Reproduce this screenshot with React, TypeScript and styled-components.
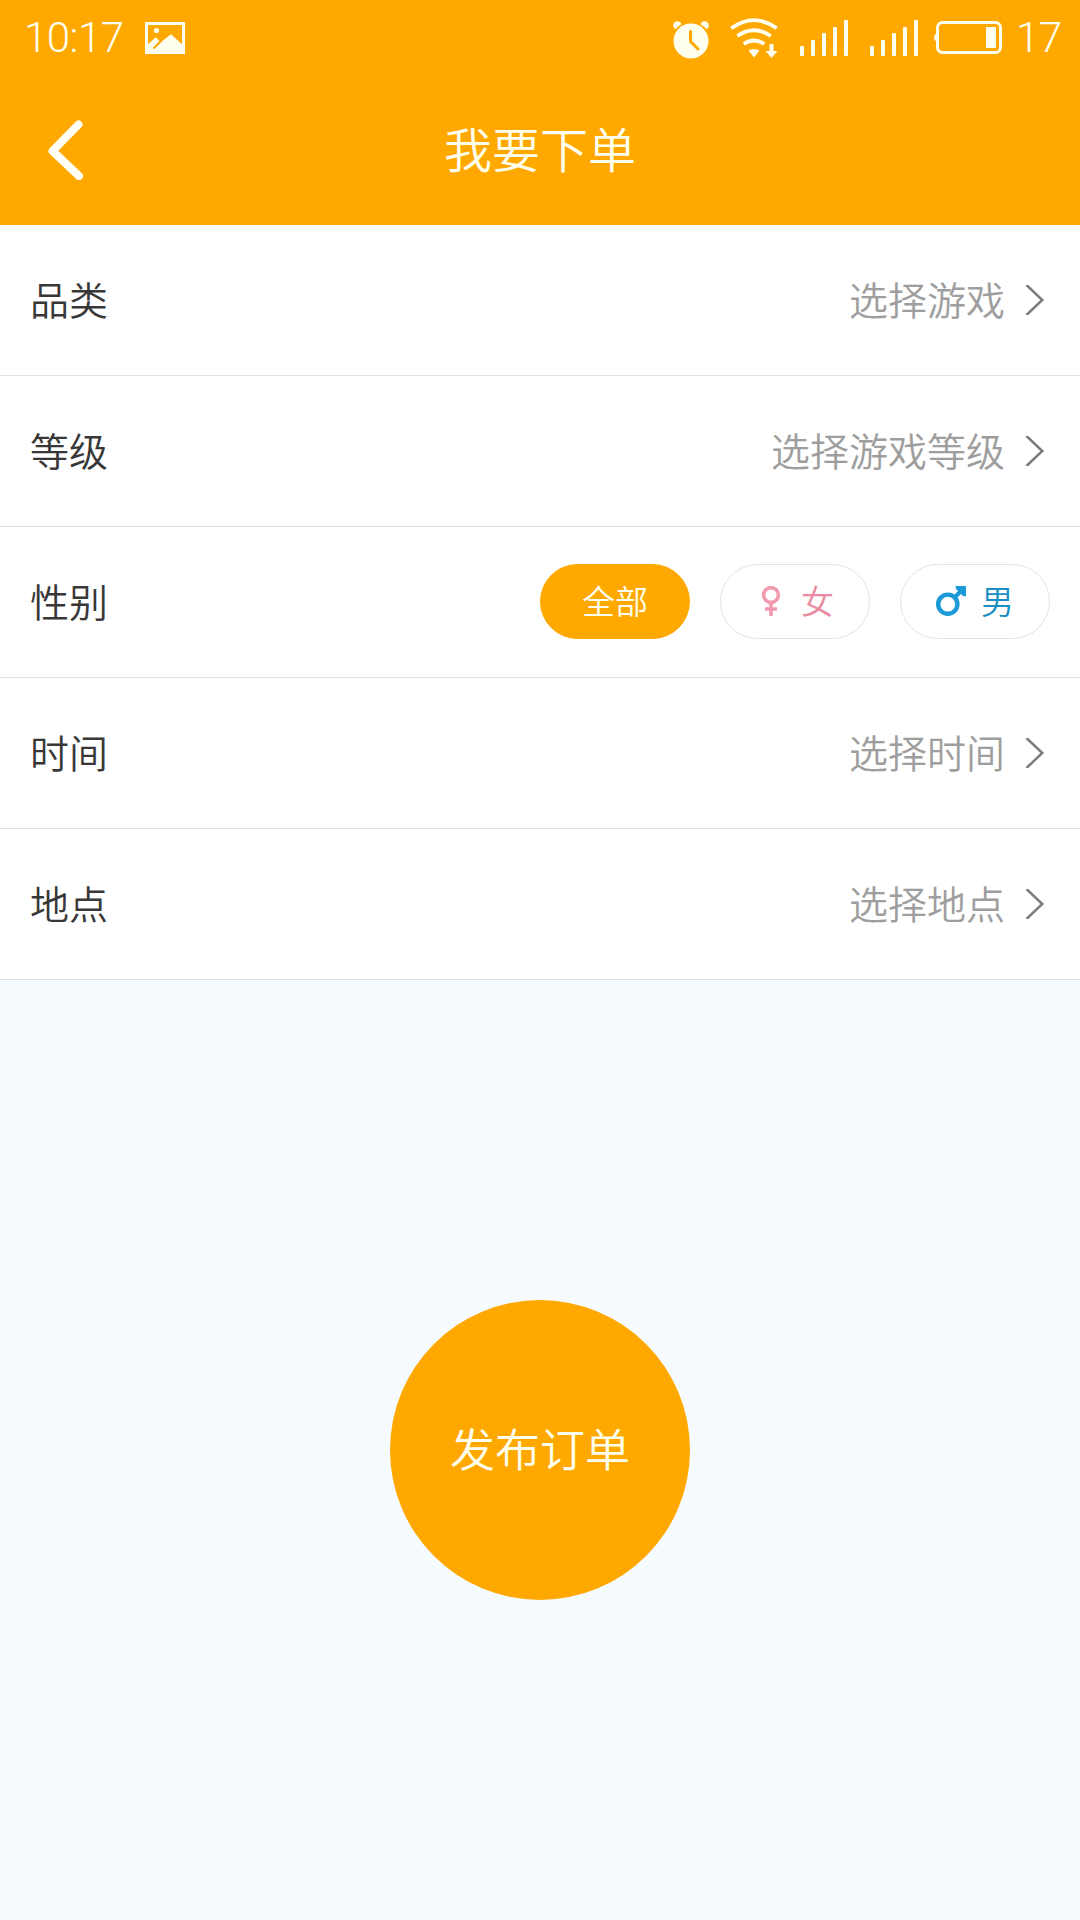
import React, { useState } from "react";
import styled, { createGlobalStyle } from "styled-components";

const ORANGE = "#ffa800";

const GlobalStyle = createGlobalStyle`
  *, *::before, *::after { box-sizing: border-box; }
  body {
    margin: 0;
    background: #f6fbff;
    font-family: Roboto, "Noto Sans CJK SC", sans-serif;
    font-weight: 350;
  }
  button { font: inherit; border: 0; padding: 0; background: none; cursor: pointer; }
  svg { display: block; flex: none; }
`;

const Screen = styled.div`
  width: 1080px;
  height: 1920px;
  display: flex;
  flex-direction: column;
  background: #f6fbff;
  overflow: hidden;
`;

const StatusBar = styled.div`
  height: 75px;
  flex: none;
  display: flex;
  justify-content: space-between;
  padding: 0 18px 0 24px;
  background: ${ORANGE};
  color: #fffff0;
`;

const StatusGroup = styled.div`
  display: flex;
  align-items: center;
  height: 75px;
`;

const StatusText = styled.span<{ $width: number }>`
  width: ${(p) => p.$width}px;
  font-family: Roboto, sans-serif;
  font-size: 42px;
  font-weight: 300;
  letter-spacing: -0.5px;
  line-height: 75px;
  white-space: nowrap;
`;

const IconSlot = styled.span<{ $after?: number; $drop?: number }>`
  display: flex;
  margin-right: ${(p) => p.$after ?? 0}px;
  padding-top: ${(p) => p.$drop ?? 0}px;
`;

const NavBar = styled.header`
  height: 150px;
  flex: none;
  display: grid;
  grid-template-columns: 150px 1fr 150px;
  align-items: center;
  background: ${ORANGE};
  color: #fffff0;
`;

const BackButton = styled.button`
  height: 150px;
  padding-left: 45px;
  display: flex;
  align-items: center;
`;

const Title = styled.h1`
  margin: 0;
  padding-top: 3px;
  text-align: center;
  font-size: 48px;
  font-weight: 350;
  line-height: 72px;
`;

const Form = styled.main`
  flex: none;
  display: flex;
  flex-direction: column;
`;

const Row = styled.div`
  height: 151px;
  display: flex;
  align-items: center;
  justify-content: space-between;
  padding: 0 30px 1px;
  background: #fff;
  border-bottom: 1px solid #e0e0e0;
`;

const Label = styled.span`
  padding-top: 4px;
  font-size: 39px;
  line-height: 58px;
  color: #383838;
`;

const Picker = styled.button`
  display: flex;
  align-items: center;
  gap: 20px;
  padding-right: 5px;
  color: #9e9e9e;
`;

const PickerValue = styled.span`
  padding-top: 4px;
  font-size: 39px;
  line-height: 58px;
`;

const Pills = styled.div`
  display: flex;
  gap: 30px;
`;

const Pill = styled.button<{ $active: boolean; $color: string }>`
  width: 150px;
  height: 75px;
  display: flex;
  align-items: center;
  justify-content: center;
  gap: 15px;
  border: 1px solid ${(p) => (p.$active ? ORANGE : "#e3e3e3")};
  border-radius: 38px;
  background: ${(p) => (p.$active ? ORANGE : "#fff")};
  color: ${(p) => (p.$active ? "#fffff0" : p.$color)};

  svg { margin-bottom: 1px; }
`;

const PillText = styled.span`
  padding-top: 2px;
  font-size: 33px;
  line-height: 48px;
`;

const Footer = styled.footer`
  display: flex;
  justify-content: center;
  padding-top: 320px;
`;

const Submit = styled.button`
  width: 300px;
  height: 300px;
  padding-top: 4px;
  border-radius: 50%;
  background: ${ORANGE};
  color: #fffff0;
  font-size: 45px;
  line-height: 66px;
`;

const PictureIcon = () => (
  <svg width="40" height="32" viewBox="0 0 40 32">
    <path fill="#fffff0" fillRule="evenodd" d="M0 0H40V32H0ZM3 3V22L10.5 15L15 19.5L26 12L37 22V3Z" />
    <path d="M3 3H37V22L26 12L15 21L14.5 18.5L11 15L3 22Z" fill={ORANGE} />
    <path d="M8.5 26.5L16 19" stroke={ORANGE} strokeWidth="2.2" />
    <circle cx="11.5" cy="8.5" r="2.6" fill="#fffff0" />
  </svg>
);

const AlarmIcon = () => (
  <svg width="36" height="38" viewBox="0 0 36 38">
    <g fill="#fffff0">
      <circle cx="4.4" cy="4.4" r="4.2" />
      <circle cx="31.6" cy="4.4" r="4.2" />
    </g>
    <circle cx="18" cy="20" r="19.3" fill={ORANGE} />
    <circle cx="18" cy="20" r="17.5" fill="#fffff0" />
    <path d="M17.5 10.5V20.5L25 28" fill="none" stroke={ORANGE} strokeWidth="3" strokeLinecap="round" />
  </svg>
);

const WifiIcon = () => (
  <svg width="48" height="40" viewBox="0 0 48 40">
    <g fill="none" stroke="#fffff0" strokeWidth="3.8">
      <path d="M1.3 10.3Q24 -6 46.7 10.3" />
      <path d="M7.3 18Q24 6.5 40.7 18" />
      <path d="M13.7 26Q24 19 34.3 26" />
    </g>
    <path fill="#fffff0" d="M18.5 32.5Q24 29.5 29.5 32.5L24 39.5ZM39.5 26H43.5V33H47.5L41.5 40L35.5 33H39.5Z" />
  </svg>
);

const BAR_HEIGHTS = [10, 16, 23, 29, 36];
const SignalIcon = () => (
  <svg width="48" height="36" viewBox="0 0 48 36">
    {BAR_HEIGHTS.map((h, i) => (
      <rect key={h} x={i * 11} y={36 - h} width="4" height={h} rx="1" fill="#fffff0" />
    ))}
  </svg>
);

const BatteryIcon = () => (
  <svg width="68" height="33" viewBox="0 0 68 33">
    <path d="M3.5 13H2Q0 13.5 0 16.5T2 20H3.5Z" fill="#fffff0" />
    <rect x="3.5" y="1.5" width="63" height="30" rx="5" fill="none" stroke="#fffff0" strokeWidth="3" />
    <rect x="52" y="6" width="10" height="21" fill="#fffff0" />
  </svg>
);

const BackIcon = () => (
  <svg width="40" height="60" viewBox="0 0 40 60">
    <path d="M33.5 4.5L7.5 31L34 56" fill="none" stroke="#fffff8" strokeWidth="8" strokeLinecap="round" strokeLinejoin="round" />
  </svg>
);

const ChevronIcon = () => (
  <svg width="20" height="30" viewBox="0 0 20 30">
    <path d="M1.5 0L17.3 15L1.5 30" fill="none" stroke="#7c7c7c" strokeWidth="2.5" />
  </svg>
);

const FemaleIcon = () => (
  <svg width="30" height="30" viewBox="0 0 30 30" fill="none" stroke="#f29bae" strokeWidth="3.6">
    <circle cx="15" cy="9" r="7.4" />
    <path d="M15 16.5V30M9 23H21" />
  </svg>
);

const MaleIcon = () => (
  <svg width="30" height="30" viewBox="0 0 30 30">
    <circle cx="11.8" cy="18.2" r="9.6" fill="none" stroke="#1d9ad6" strokeWidth="4.4" />
    <path d="M18.5 11.5L26 4" stroke="#1d9ad6" strokeWidth="4" />
    <path d="M19.5 0H30V10.5L27 10L20 3Z" fill="#1d9ad6" />
  </svg>
);

const GENDERS = [
  { id: "all", label: "全部", color: "#333", icon: null },
  { id: "female", label: "女", color: "#ea8ba2", icon: <FemaleIcon /> },
  { id: "male", label: "男", color: "#1a8fc4", icon: <MaleIcon /> },
];

const PickerRow = ({ label, value }: { label: string; value: string }) => (
  <Row>
    <Label>{label}</Label>
    <Picker>
      <PickerValue>{value}</PickerValue>
      <ChevronIcon />
    </Picker>
  </Row>
);

export default function App() {
  const [gender, setGender] = useState("all");

  return (
    <Screen lang="zh-CN">
      <GlobalStyle />
      <StatusBar>
        <StatusGroup>
          <StatusText $width={121}>10:17</StatusText>
          <PictureIcon />
        </StatusGroup>
        <StatusGroup>
          <IconSlot $after={21} $drop={4}><AlarmIcon /></IconSlot>
          <IconSlot $after={22}><WifiIcon /></IconSlot>
          <IconSlot $after={22} $drop={1}><SignalIcon /></IconSlot>
          <IconSlot $after={16} $drop={1}><SignalIcon /></IconSlot>
          <IconSlot $after={14}><BatteryIcon /></IconSlot>
          <StatusText $width={46}>17</StatusText>
        </StatusGroup>
      </StatusBar>
      <NavBar>
        <BackButton aria-label="返回">
          <BackIcon />
        </BackButton>
        <Title>我要下单</Title>
      </NavBar>
      <Form>
        <PickerRow label="品类" value="选择游戏" />
        <PickerRow label="等级" value="选择游戏等级" />
        <Row>
          <Label>性别</Label>
          <Pills>
            {GENDERS.map((g) => (
              <Pill key={g.id} $active={gender === g.id} $color={g.color} onClick={() => setGender(g.id)}>
                {g.icon}
                <PillText>{g.label}</PillText>
              </Pill>
            ))}
          </Pills>
        </Row>
        <PickerRow label="时间" value="选择时间" />
        <PickerRow label="地点" value="选择地点" />
      </Form>
      <Footer>
        <Submit>发布订单</Submit>
      </Footer>
    </Screen>
  );
}
